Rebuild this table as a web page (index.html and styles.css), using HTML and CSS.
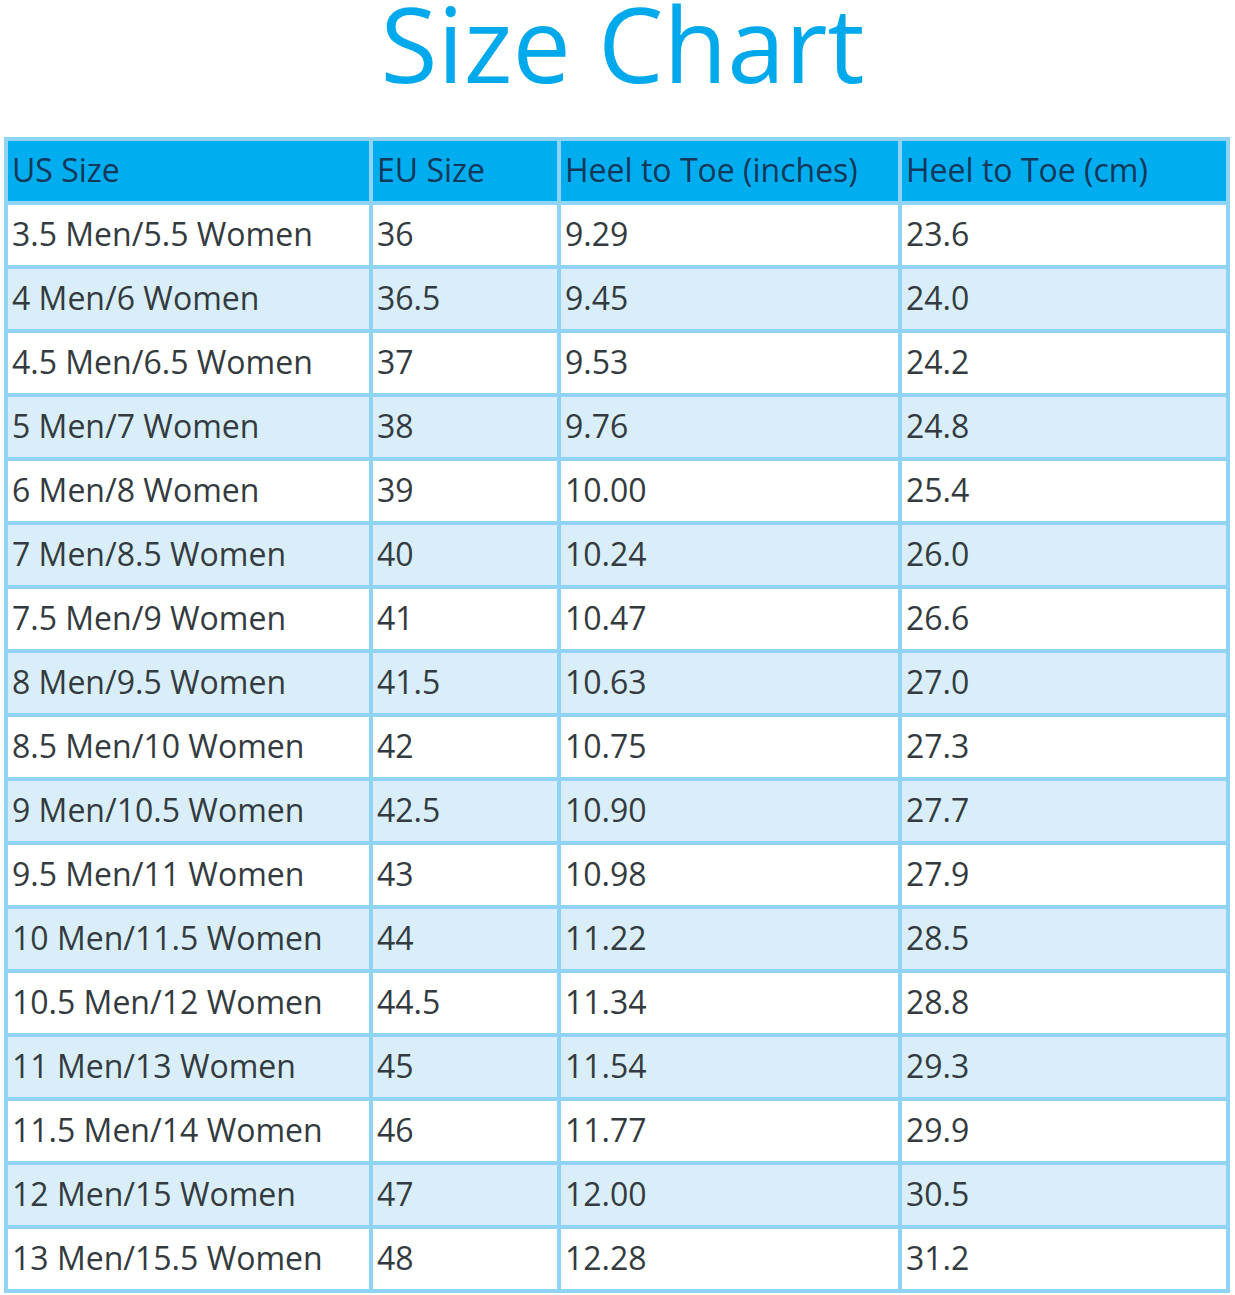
FILE: index.html
```html
<!DOCTYPE html>
<html lang="en">
<head>
<meta charset="utf-8">
<title>Size Chart</title>
<link rel="stylesheet" href="styles.css">
</head>
<body>
<h1 class="title">Size Chart</h1>
<table class="chart">
  <colgroup>
    <col class="c1"><col class="c2"><col class="c3"><col class="c4">
  </colgroup>
  <thead>
    <tr><th>US Size</th><th>EU Size</th><th>Heel to Toe (inches)</th><th>Heel to Toe (cm)</th></tr>
  </thead>
  <tbody>
    <tr><td>3.5 Men/5.5 Women</td><td>36</td><td>9.29</td><td>23.6</td></tr>
    <tr><td>4 Men/6 Women</td><td>36.5</td><td>9.45</td><td>24.0</td></tr>
    <tr><td>4.5 Men/6.5 Women</td><td>37</td><td>9.53</td><td>24.2</td></tr>
    <tr><td>5 Men/7 Women</td><td>38</td><td>9.76</td><td>24.8</td></tr>
    <tr><td>6 Men/8 Women</td><td>39</td><td>10.00</td><td>25.4</td></tr>
    <tr><td>7 Men/8.5 Women</td><td>40</td><td>10.24</td><td>26.0</td></tr>
    <tr><td>7.5 Men/9 Women</td><td>41</td><td>10.47</td><td>26.6</td></tr>
    <tr><td>8 Men/9.5 Women</td><td>41.5</td><td>10.63</td><td>27.0</td></tr>
    <tr><td>8.5 Men/10 Women</td><td>42</td><td>10.75</td><td>27.3</td></tr>
    <tr><td>9 Men/10.5 Women</td><td>42.5</td><td>10.90</td><td>27.7</td></tr>
    <tr><td>9.5 Men/11 Women</td><td>43</td><td>10.98</td><td>27.9</td></tr>
    <tr><td>10 Men/11.5 Women</td><td>44</td><td>11.22</td><td>28.5</td></tr>
    <tr><td>10.5 Men/12 Women</td><td>44.5</td><td>11.34</td><td>28.8</td></tr>
    <tr><td>11 Men/13 Women</td><td>45</td><td>11.54</td><td>29.3</td></tr>
    <tr><td>11.5 Men/14 Women</td><td>46</td><td>11.77</td><td>29.9</td></tr>
    <tr><td>12 Men/15 Women</td><td>47</td><td>12.00</td><td>30.5</td></tr>
    <tr><td>13 Men/15.5 Women</td><td>48</td><td>12.28</td><td>31.2</td></tr>
  </tbody>
</table>
</body>
</html>
```

FILE: styles.css
```css
html, body {
  margin: 0;
  padding: 0;
  background: #ffffff;
}

body {
  font-family: "Open Sans", "Noto Sans", sans-serif;
  width: 1235px;
}

.title {
  margin: 0;
  height: 137px;
  font-size: 104px;
  line-height: 86px;
  font-weight: 400;
  text-align: center;
  color: #00a9ec;
  padding-left: 10px;
}

.chart {
  margin-left: 4px;
  width: 1226px;
  table-layout: fixed;
  border-collapse: separate;
  border-spacing: 0;
  border-top: 4px solid #8fd4f4;
  border-left: 4px solid #8fd4f4;
}

.c1 { width: 365px; }
.c2 { width: 188px; }
.c3 { width: 341px; }
.c4 { width: 328px; }

.chart th,
.chart td {
  box-sizing: border-box;
  height: 64px;
  padding: 0 0 3px 4px;
  border-right: 4px solid #8fd4f4;
  border-bottom: 4px solid #8fd4f4;
  text-align: left;
  vertical-align: middle;
  font-size: 32px;
  font-weight: 400;
  white-space: nowrap;
  overflow: hidden;
}

.chart th {
  background: #00adef;
  color: #13385a;
}

.chart td {
  color: #333b40;
  background: #ffffff;
}

.chart tbody tr:nth-child(even) td {
  background: #d9eef8;
}
```
